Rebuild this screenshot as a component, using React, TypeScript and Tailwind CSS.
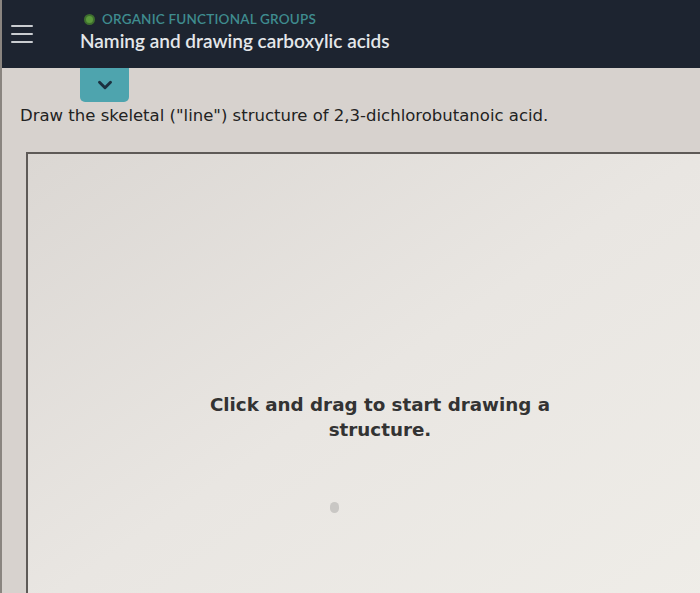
import { ChevronDown } from 'lucide-react';

function Header() {
  return (
    <header className="h-[68px] bg-[#1d2430] flex items-start">
      <button className="w-[40px] h-full flex flex-col items-start justify-center gap-[6px] pl-[9px]">
        <span className="block w-[22px] h-[2px] bg-[#c9ccd0] rounded" />
        <span className="block w-[22px] h-[2px] bg-[#c9ccd0] rounded" />
        <span className="block w-[22px] h-[2px] bg-[#c9ccd0] rounded" />
      </button>
      <div className="ml-[38px] pt-[11px] flex flex-col">
        <div className="flex items-center gap-[7px] ml-[4px]">
          <span className="w-[11px] h-[11px] rounded-full bg-[#5b9a3c] border-2 border-[#3e6f2e]" />
          <span className="text-[13.5px] leading-[17px] tracking-[0.2px] text-[#3f8c8f] font-semibold">
            ORGANIC FUNCTIONAL GROUPS
          </span>
        </div>
        <h1 className="mt-[1px] text-[19px] leading-[24px] font-semibold text-[#e4e7ea]">
          Naming and drawing carboxylic acids
        </h1>
      </div>
    </header>
  );
}

export default function App() {
  return (
    <div
      className="w-[700px] h-[593px] overflow-hidden bg-[#d7d2ce] border-l-2 border-[#8a8580]"
      style={{ fontFamily: 'Lato, "Open Sans", sans-serif' }}
    >
      <Header />
      <div className="ml-[78px] w-[49px] h-[34px] bg-[#4ea4ae] rounded-b-[5px] flex items-center justify-center">
        <ChevronDown size={22} strokeWidth={3.2} className="text-[#1c3140]" />
      </div>
      <p
        className="ml-[18px] mt-[3px] text-[16.5px] leading-[22px] text-[#222222]"
        style={{ fontFamily: '"DejaVu Sans", Verdana, sans-serif' }}
      >
        Draw the skeletal ("line") structure of 2,3-dichlorobutanoic acid.
      </p>
      <div className="ml-[24px] mt-[25px] h-[460px] border-t-2 border-l-2 border-[#5e5a57] bg-gradient-to-br from-[#dbd7d3] via-[#e9e6e2] to-[#efede8] flex flex-col items-center">
        <p
          className="mt-[238px] ml-[32px] w-[380px] text-center text-[18.3px] leading-[25px] font-bold text-[#333333]"
          style={{ fontFamily: '"DejaVu Sans", Verdana, sans-serif' }}
        >
          Click and drag to start drawing a structure.
        </p>
        <span className="mt-[60px] ml-[-60px] w-[9px] h-[11px] rounded-full bg-[#c9c7c4]" />
      </div>
    </div>
  );
}
